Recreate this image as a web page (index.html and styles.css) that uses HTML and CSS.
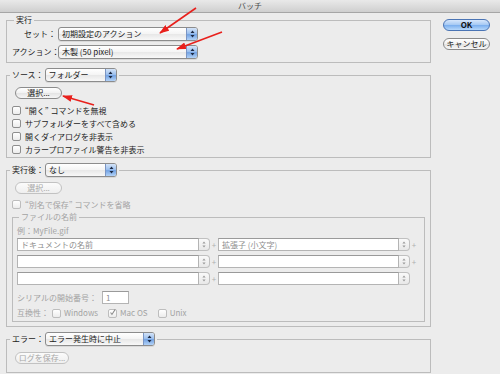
FILE: index.html
```html
<!DOCTYPE html>
<html lang="ja">
<head>
  <meta charset="UTF-8" />
  <title>バッチ</title>
  <link rel="stylesheet" href="styles.css">
</head>
<body>

<div class="window">
  <div class="titlebar">バッチ</div>

  <div class="dialog">
    <div class="main">

      <!-- 実行 -->
      <fieldset class="group group-run">
        <legend>実行</legend>
        <div class="form-row">
          <span class="row-label">セット：</span>
          <span class="popup popup-wide">
            <span class="popup-text">初期設定のアクション</span>
            <span class="stepper"><svg width="5" height="8" viewBox="0 0 5 8"><path d="M2.5 0.5 L4.5 3 L0.5 3 Z M0.5 5 L4.5 5 L2.5 7.5 Z" fill="#1d2a44"/></svg></span>
          </span>
        </div>
        <div class="form-row">
          <span class="row-label">アクション：</span>
          <span class="popup popup-wide">
            <span class="popup-text">木製 (50 pixel)</span>
            <span class="stepper"><svg width="5" height="8" viewBox="0 0 5 8"><path d="M2.5 0.5 L4.5 3 L0.5 3 Z M0.5 5 L4.5 5 L2.5 7.5 Z" fill="#1d2a44"/></svg></span>
          </span>
        </div>
      </fieldset>

      <!-- ソース -->
      <fieldset class="group group-source">
        <legend>
          <span class="legend-head">ソース：
            <span class="popup popup-short">
              <span class="popup-text">フォルダー</span>
              <span class="stepper"><svg width="5" height="8" viewBox="0 0 5 8"><path d="M2.5 0.5 L4.5 3 L0.5 3 Z M0.5 5 L4.5 5 L2.5 7.5 Z" fill="#1d2a44"/></svg></span>
            </span>
          </span>
        </legend>
        <button class="pill">選択...</button>
        <ul class="checks">
          <li><span class="check"></span>“開く” コマンドを無視</li>
          <li><span class="check"></span>サブフォルダーをすべて含める</li>
          <li><span class="check"></span>開くダイアログを非表示</li>
          <li><span class="check"></span>カラープロファイル警告を非表示</li>
        </ul>
      </fieldset>

      <!-- 実行後 -->
      <fieldset class="group group-after">
        <legend>
          <span class="legend-head">実行後：
            <span class="popup popup-short">
              <span class="popup-text">なし</span>
              <span class="stepper"><svg width="5" height="8" viewBox="0 0 5 8"><path d="M2.5 0.5 L4.5 3 L0.5 3 Z M0.5 5 L4.5 5 L2.5 7.5 Z" fill="#1d2a44"/></svg></span>
            </span>
          </span>
        </legend>
        <button class="pill pill-disabled" disabled>選択...</button>
        <ul class="checks checks-disabled">
          <li><span class="check"></span>“別名で保存” コマンドを省略</li>
        </ul>

        <fieldset class="subgroup">
          <legend>ファイルの名前</legend>
          <div class="example">例：MyFile.gif</div>

          <div class="name-rows">
            <div class="name-row">
              <span class="combo combo-first"><span class="combo-text">ドキュメントの名前</span><span class="combo-step"><svg width="4" height="7" viewBox="0 0 4 7"><path d="M2 0.5 L3.6 2.6 L0.4 2.6 Z M0.4 4.4 L3.6 4.4 L2 6.5 Z" fill="#9a9a9a"/></svg></span></span>
              <span class="plus">+</span>
              <span class="combo"><span class="combo-text">拡張子 (小文字)</span><span class="combo-step"><svg width="4" height="7" viewBox="0 0 4 7"><path d="M2 0.5 L3.6 2.6 L0.4 2.6 Z M0.4 4.4 L3.6 4.4 L2 6.5 Z" fill="#9a9a9a"/></svg></span></span>
              <span class="plus">+</span>
            </div>
            <div class="name-row">
              <span class="combo combo-first"><span class="combo-text"></span><span class="combo-step"><svg width="4" height="7" viewBox="0 0 4 7"><path d="M2 0.5 L3.6 2.6 L0.4 2.6 Z M0.4 4.4 L3.6 4.4 L2 6.5 Z" fill="#9a9a9a"/></svg></span></span>
              <span class="plus">+</span>
              <span class="combo"><span class="combo-text"></span><span class="combo-step"><svg width="4" height="7" viewBox="0 0 4 7"><path d="M2 0.5 L3.6 2.6 L0.4 2.6 Z M0.4 4.4 L3.6 4.4 L2 6.5 Z" fill="#9a9a9a"/></svg></span></span>
              <span class="plus">+</span>
            </div>
            <div class="name-row">
              <span class="combo combo-first"><span class="combo-text"></span><span class="combo-step"><svg width="4" height="7" viewBox="0 0 4 7"><path d="M2 0.5 L3.6 2.6 L0.4 2.6 Z M0.4 4.4 L3.6 4.4 L2 6.5 Z" fill="#9a9a9a"/></svg></span></span>
              <span class="plus">+</span>
              <span class="combo"><span class="combo-text"></span><span class="combo-step"><svg width="4" height="7" viewBox="0 0 4 7"><path d="M2 0.5 L3.6 2.6 L0.4 2.6 Z M0.4 4.4 L3.6 4.4 L2 6.5 Z" fill="#9a9a9a"/></svg></span></span>
            </div>
          </div>

          <div class="serial-row">
            <span>シリアルの開始番号：</span>
            <span class="serial-input">1</span>
          </div>

          <div class="compat-row">
            <span>互換性：</span>
            <span class="compat-item"><span class="check"></span>Windows</span>
            <span class="compat-item"><span class="check check-on"><svg width="9" height="9" viewBox="0 0 9 9"><path d="M2 4.5 L3.8 7 L8 0.5" fill="none" stroke="#8a8a8a" stroke-width="1.3"/></svg></span>Mac OS</span>
            <span class="compat-item"><span class="check"></span>Unix</span>
          </div>
        </fieldset>
      </fieldset>

      <!-- エラー -->
      <fieldset class="group group-error">
        <legend>
          <span class="legend-head">エラー：
            <span class="popup popup-error">
              <span class="popup-text">エラー発生時に中止</span>
              <span class="stepper"><svg width="5" height="8" viewBox="0 0 5 8"><path d="M2.5 0.5 L4.5 3 L0.5 3 Z M0.5 5 L4.5 5 L2.5 7.5 Z" fill="#1d2a44"/></svg></span>
            </span>
          </span>
        </legend>
        <button class="pill pill-disabled pill-log" disabled>ログを保存...</button>
      </fieldset>

    </div>

    <div class="side">
      <button class="btn btn-default">OK</button>
      <button class="btn">キャンセル</button>
    </div>
  </div>

  <!-- red annotation arrows -->
  <svg class="annotations" width="500" height="374" viewBox="0 0 500 374">
    <defs>
      <marker id="head" viewBox="0 0 10 7" refX="9" refY="3.5" markerWidth="10" markerHeight="7" markerUnits="userSpaceOnUse" orient="auto">
        <path d="M0 0 L10 3.5 L0 7 Z" fill="#e8201c"/>
      </marker>
    </defs>
    <line x1="196" y1="8" x2="160" y2="33" stroke="#e8201c" stroke-width="1.6" marker-end="url(#head)"/>
    <line x1="222" y1="32" x2="177" y2="49" stroke="#e8201c" stroke-width="1.6" marker-end="url(#head)"/>
    <line x1="94" y1="105" x2="63" y2="96" stroke="#e8201c" stroke-width="1.6" marker-end="url(#head)"/>
  </svg>
</div>

</body>
</html>
```

FILE: styles.css
```css
* { box-sizing: border-box; }
body {
  margin: 0; background: #ececec; color: #1c1c1c;
  font-family: "Noto Sans CJK JP", "Noto Sans", sans-serif;
  font-size: 8px; line-height: 10px;
}
.window { position: relative; width: 500px; height: 374px; overflow: hidden; }
.titlebar {
  height: 13px; line-height: 12px; text-align: center; color: #4a4a4a;
  background: linear-gradient(#e9e9e9, #cfcfcf);
  border-bottom: 1px solid #a6a6a6;
}
.dialog { display: flex; padding: 2px 0 0 6px; }
.main { width: 425px; }
.side {
  margin-left: 12px; width: 47px; padding-top: 4px;
  display: flex; flex-direction: column; gap: 7px;
}

/* group boxes */
.group {
  margin: 0; min-width: 0;
  border: 1px solid #bcbcbc;
  padding: 0 5px 1px;
}
.group + .group { margin-top: 5px; }
.group > legend { padding: 0 2px; margin-left: -2px; }
.group-run { padding: 2px 5px 3px; }
.group-run > legend { margin-left: 2px; }
.legend-head { display: flex; align-items: center; gap: 1px; }

.form-row { display: flex; align-items: center; gap: 2px; height: 14px; }
.form-row + .form-row { margin-top: 4px; }
.row-label { width: 44px; text-align: right; white-space: nowrap; }

/* aqua popup menu */
.popup {
  display: flex; align-items: stretch; height: 14px;
  border: 1px solid #8c8c8c; border-radius: 3px; overflow: hidden;
  background: linear-gradient(#ffffff, #f4f4f4 50%, #e7e7e7 51%, #f8f8f8);
  box-shadow: 0 1px 0 rgba(0,0,0,0.08);
}
.popup-text { flex: 1; padding-left: 3px; line-height: 12px; white-space: nowrap; }
.popup-wide { width: 140px; }
.popup-short { width: 72px; }
.popup-error { width: 110px; }
.stepper {
  width: 11px; display: flex; align-items: center; justify-content: center;
  border-left: 1px solid #7a95c4;
  background: linear-gradient(#d3e3f8, #9fc2ef 45%, #74a3e3 55%, #b2d2f7);
}

/* pill buttons */
.pill {
  display: block; width: 47px; height: 12px; padding: 0;
  margin: 5px 0 0 3px;
  font: inherit; line-height: 10px; color: #1c1c1c;
  border: 1px solid #8c8c8c; border-radius: 6px;
  background: linear-gradient(#ffffff, #f1f1f1 50%, #e4e4e4 51%, #f6f6f6);
}
.pill-disabled { color: #a8a8a8; border-color: #c2c2c2; background: linear-gradient(#fbfbfb, #efefef); }
.pill-log { width: 54px; margin-top: 6px; margin-bottom: 7px; }

/* checkboxes */
.checks { list-style: none; margin: 5px 0 0; padding: 0; }
.checks li { display: flex; align-items: center; gap: 4px; height: 13px; white-space: nowrap; }
.check {
  width: 9px; height: 9px; flex: none; display: inline-flex;
  border: 1px solid #8e8e8e; border-radius: 2px;
  background: linear-gradient(#ffffff, #ececec);
}
.checks-disabled { margin-top: 4px; color: #a3a3a3; }
.checks-disabled .check, .subgroup .check { border-color: #bdbdbd; }
.check-on { overflow: visible; }
.check-on svg { margin: -2px 0 0 0; }

/* ファイルの名前 */
.subgroup {
  margin: 1px 0 0; min-width: 0;
  border: 1px solid #bcbcbc;
  padding: 4px 4px 2px;
  color: #a3a3a3;
}
.subgroup > legend { padding: 0 2px; margin-left: 2px; }
.example { height: 10px; }
.name-rows { margin-top: 2px; display: flex; flex-direction: column; gap: 4px; }
.name-row { display: flex; align-items: center; height: 13px; }
.combo { display: flex; width: 192px; height: 13px; }
.combo-first { width: 193px; }
.combo-text {
  flex: 1; background: #fff; padding-left: 3px; line-height: 11px;
  border: 1px solid #b4b4b4; border-top-color: #9a9a9a;
  color: #8e8e8e; white-space: nowrap;
}
.combo-step {
  width: 11px; display: flex; align-items: center; justify-content: center;
  border: 1px solid #c0c0c0; border-left: none; border-radius: 0 4px 4px 0;
  background: linear-gradient(#fafafa, #e8e8e8);
}
.plus { width: 8px; text-align: center; color: #b0b0b0; }

.serial-row { display: flex; align-items: center; gap: 5px; margin-top: 6px; height: 13px; }
.serial-input {
  width: 27px; height: 13px; background: #fff; padding-left: 3px; line-height: 11px;
  border: 1px solid #b4b4b4; border-top-color: #9a9a9a; color: #8e8e8e;
}
.compat-row { display: flex; align-items: center; gap: 10px; margin-top: 3px; height: 12px; }
.compat-row > span:first-child { margin-right: -7px; }
.compat-item { display: flex; align-items: center; gap: 3px; }

.group-after { padding-bottom: 4px; }

/* dialog buttons */
.btn {
  width: 47px; height: 12px; padding: 0;
  font: inherit; line-height: 10px; color: #1c1c1c;
  border: 1px solid #8a8a8a; border-radius: 6px;
  background: linear-gradient(#ffffff, #f1f1f1 50%, #e2e2e2 51%, #f7f7f7);
}
.btn-default {
  border-color: #4a74b4; font-weight: bold; color: #111;
  background: linear-gradient(#d6e6fb, #a9cbf4 45%, #7eb1ef 55%, #b6d7fa);
}

.annotations { position: absolute; top: 0; left: 0; pointer-events: none; }
```
